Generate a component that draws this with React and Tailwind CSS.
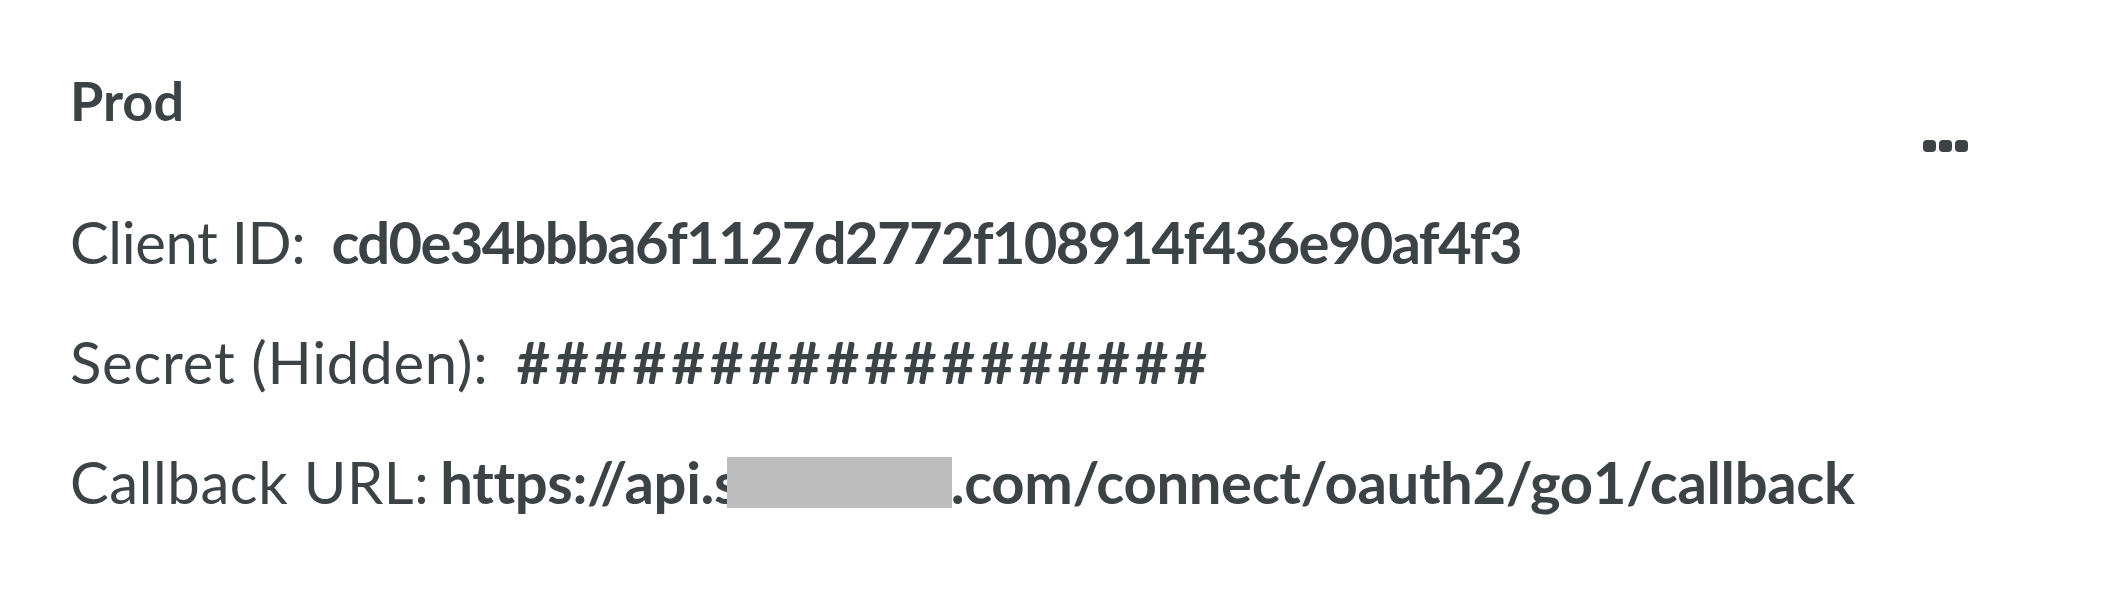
export default function App() {
  return (
    <div className="min-h-[592px] w-full bg-white text-[#3c4346]" style={{ fontFamily: 'Lato, "Open Sans", sans-serif' }}>
      <div className="pl-[70px] pr-[134px] pt-[74px]">
        <div className="flex items-start justify-between">
          <h2 className="text-[54px] font-bold leading-[54px]">Prod</h2>
          <div className="mt-[66px] flex gap-[3px]">
            <span className="h-[12px] w-[13px] rounded-[4px] bg-[#3c4346]" />
            <span className="h-[12px] w-[13px] rounded-[4px] bg-[#3c4346]" />
            <span className="h-[12px] w-[13px] rounded-[4px] bg-[#3c4346]" />
          </div>
        </div>

        <div className="mt-[30px] flex flex-col text-[58px] leading-[120px]">
          <div className="flex items-baseline">
            <span className="font-normal tracking-[-0.4px]">Client ID:</span>
            <span className="ml-[26px] font-bold tracking-[-1.7px]">cd0e34bbba6f1127d2772f108914f436e90af4f3</span>
          </div>
          <div className="flex items-baseline">
            <span className="font-normal tracking-[0.8px]">Secret (Hidden):</span>
            <span className="ml-[28px] font-bold tracking-[5px]">##################</span>
          </div>
          <div className="flex items-baseline">
            <span className="font-normal tracking-[0.6px]">Callback URL:</span>
            <span className="ml-[11px] flex items-baseline font-bold tracking-[-0.35px]">
              <span>https://api.s</span>
              <span className="relative z-10 -ml-[12px] -mr-[32px] inline-block h-[51px] w-[225px] translate-y-[4px] bg-[#bdbdbd]" />
              <span>e.com/connect/oauth2/go1/callback</span>
            </span>
          </div>
        </div>
      </div>
    </div>
  )
}
